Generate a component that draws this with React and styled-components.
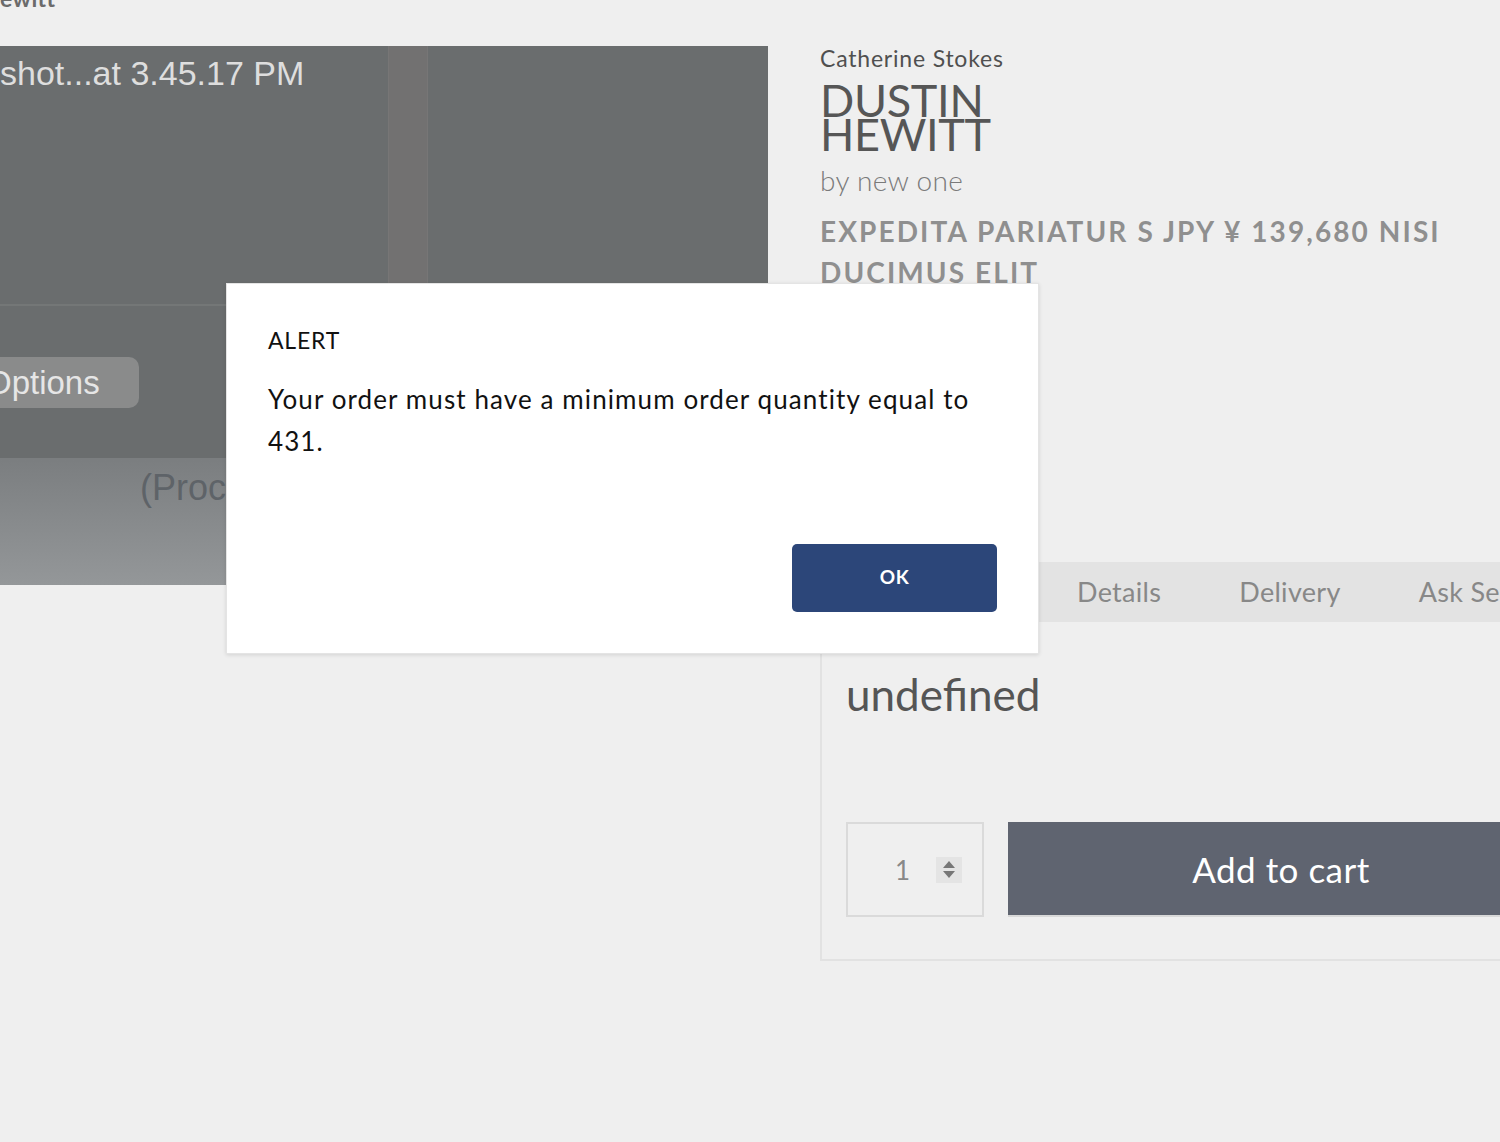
import React from "react";
import styled, { createGlobalStyle } from "styled-components";

const Global = createGlobalStyle`
  html, body {
    margin: 0;
    padding: 0;
    width: 1500px;
    height: 1142px;
    overflow: hidden;
    background: #efefef;
  }
  * { box-sizing: border-box; }
`;

const font = `"Lato", "Open Sans", sans-serif`;

const Page = styled.div`
  position: relative;
  width: 1500px;
  height: 1142px;
  overflow: hidden;
  font-family: ${font};
`;

const Crumb = styled.div`
  margin-top: -14px;
  height: 60px;
  font-size: 23px;
  font-weight: 700;
  letter-spacing: 0.4px;
  color: #6b6b6b;
  line-height: 24px;
`;

const Main = styled.div`
  display: grid;
  grid-template-columns: 768px 760px;
  column-gap: 52px;
  align-items: start;
`;

const Gallery = styled.div`
  height: 539px;
  display: flex;
  flex-direction: column;
  background: #6a6d6e;
  font-family: "Liberation Sans", Arial, sans-serif;
`;

const ShotTop = styled.div`
  height: 258px;
  display: flex;
`;

const ShotTitleCell = styled.div`
  width: 388px;
  padding-top: 8px;
  font-size: 34px;
  color: #dedede;
  line-height: 38px;
  white-space: nowrap;
`;

const Stripe = styled.div`
  width: 40px;
  background: #727171;
  border-left: 1px solid #777676;
  border-right: 1px solid #777676;
  display: flex;
  align-items: flex-end;
  justify-content: center;
  gap: 4px;
`;

const Tick = styled.span`
  width: 2px;
  height: 8px;
  background: #8a8a8a;
  margin-bottom: 6px;
`;

const ShotRow = styled.div`
  height: 154px;
  border-top: 2px solid #747777;
  display: flex;
  align-items: flex-start;
  padding-top: 51px;
`;

const OptionsButton = styled.div`
  margin-left: -40px;
  width: 179px;
  height: 51px;
  border-radius: 10px;
  background: #8a8b8b;
  color: #e6e6e6;
  font-size: 33px;
  line-height: 51px;
  padding-left: 26px;
`;

const ShotFoot = styled.div`
  flex: 1;
  border-top: 2px solid #7b7e80;
  background: linear-gradient(#7b7e80, #949799);
  padding-left: 140px;
  padding-top: 8px;
  font-size: 36px;
  color: #5e6368;
  line-height: 40px;
  white-space: nowrap;
`;

const Info = styled.div`
  display: flex;
  flex-direction: column;
  color: #555;
`;

const Vendor = styled.div`
  font-size: 23px;
  line-height: 24px;
  letter-spacing: 0.8px;
  color: #505050;
`;

const Title = styled.h1`
  margin: 13px 0 0;
  font-size: 45px;
  font-weight: 400;
  line-height: 34px;
  color: #565656;
  letter-spacing: -0.3px;
`;

const By = styled.div`
  margin-top: 12px;
  font-size: 28px;
  font-weight: 300;
  letter-spacing: 0.3px;
  color: #7a7a7a;
  line-height: 34px;
`;

const Price = styled.div`
  margin-top: 14px;
  width: 650px;
  font-size: 28px;
  font-weight: 700;
  letter-spacing: 2.1px;
  line-height: 41px;
  color: #8f8f8f;
  text-transform: uppercase;
`;

const Tabs = styled.div`
  margin-top: 269px;
  height: 60px;
  display: flex;
  background: #e3e3e3;
`;

const Tab = styled.div`
  padding: 0 39px;
  font-size: 27px;
  letter-spacing: 0.3px;
  line-height: 60px;
  color: ${(p) => (p.$active ? "#333" : "#888")};
  background: ${(p) => (p.$active ? "#efefef" : "transparent")};
  white-space: nowrap;
  width: ${(p) => p.$w || "auto"};
`;

const Panel = styled.div`
  border-left: 2px solid #e2e2e2;
  border-bottom: 2px solid #e2e2e2;
  padding: 46px 26px 42px 24px;
  display: flex;
  flex-direction: column;
`;

const Desc = styled.div`
  font-size: 44px;
  line-height: 52px;
  color: #555;
  height: 154px;
`;

const BuyRow = styled.div`
  display: flex;
  gap: 24px;
  height: 95px;
`;

const Qty = styled.div`
  width: 138px;
  border: 2px solid #dadada;
  display: flex;
  align-items: center;
  justify-content: flex-end;
  gap: 26px;
  padding-right: 20px;
  font-size: 26px;
  color: #888;
`;

const Spinner = styled.div`
  width: 26px;
  height: 26px;
  background: #e4e4e4;
  display: flex;
  flex-direction: column;
  align-items: center;
  justify-content: center;
  gap: 3px;
`;

const Arrow = styled.span`
  width: 0;
  height: 0;
  border-left: 6px solid transparent;
  border-right: 6px solid transparent;
  ${(p) =>
    p.$up
      ? "border-bottom: 7px solid #777;"
      : "border-top: 7px solid #777;"}
`;

const CartButton = styled.button`
  flex: 1;
  border: none;
  border-bottom: 2px solid #d8d8d8;
  background: #5f6470;
  color: #fff;
  font-family: ${font};
  font-size: 35px;
  letter-spacing: 0.5px;
`;

const Modal = styled.div`
  position: absolute;
  left: 226px;
  top: 283px;
  width: 813px;
  height: 371px;
  background: #fff;
  border: 1px solid #e4e4e4;
  box-shadow: 0 1px 4px rgba(0, 0, 0, 0.12);
  padding: 42px 41px 40px 41px;
  display: flex;
  flex-direction: column;
  color: #111;
`;

const ModalTitle = styled.div`
  font-size: 23px;
  line-height: 28px;
  letter-spacing: 0.8px;
`;

const ModalText = styled.div`
  margin-top: 24px;
  font-size: 26px;
  line-height: 42px;
  letter-spacing: 1.1px;
`;

const ModalActions = styled.div`
  margin-top: auto;
  display: flex;
  justify-content: flex-end;
`;

const OkButton = styled.button`
  width: 205px;
  height: 68px;
  margin-bottom: 1px;
  border: none;
  border-radius: 5px;
  background: #2c4679;
  color: #fff;
  font-family: ${font};
  font-size: 19px;
  font-weight: 700;
  letter-spacing: 0.5px;
  padding-bottom: 4px;
`;

export default function App() {
  return (
    <>
      <Global />
      <Page>
        <Crumb>ewitt</Crumb>
        <Main>
          <Gallery>
            <ShotTop>
              <ShotTitleCell>shot...at 3.45.17 PM</ShotTitleCell>
              <Stripe>
                <Tick />
                <Tick />
              </Stripe>
            </ShotTop>
            <ShotRow>
              <OptionsButton>Options</OptionsButton>
            </ShotRow>
            <ShotFoot>(Processing)</ShotFoot>
          </Gallery>
          <Info>
            <Vendor>Catherine Stokes</Vendor>
            <Title>
              DUSTIN
              <br />
              HEWITT
            </Title>
            <By>by new one</By>
            <Price>Expedita pariatur s JPY ¥ 139,680 nisi ducimus elit</Price>
            <Tabs>
              <Tab $active $w="218px" />
              <Tab>Details</Tab>
              <Tab>Delivery</Tab>
              <Tab>Ask Seller</Tab>
            </Tabs>
            <Panel>
              <Desc>undefined</Desc>
              <BuyRow>
                <Qty>
                  1
                  <Spinner>
                    <Arrow $up />
                    <Arrow />
                  </Spinner>
                </Qty>
                <CartButton>Add to cart</CartButton>
              </BuyRow>
            </Panel>
          </Info>
        </Main>
        <Modal>
          <ModalTitle>ALERT</ModalTitle>
          <ModalText>
            Your order must have a minimum order quantity equal to 431.
          </ModalText>
          <ModalActions>
            <OkButton>OK</OkButton>
          </ModalActions>
        </Modal>
      </Page>
    </>
  );
}
